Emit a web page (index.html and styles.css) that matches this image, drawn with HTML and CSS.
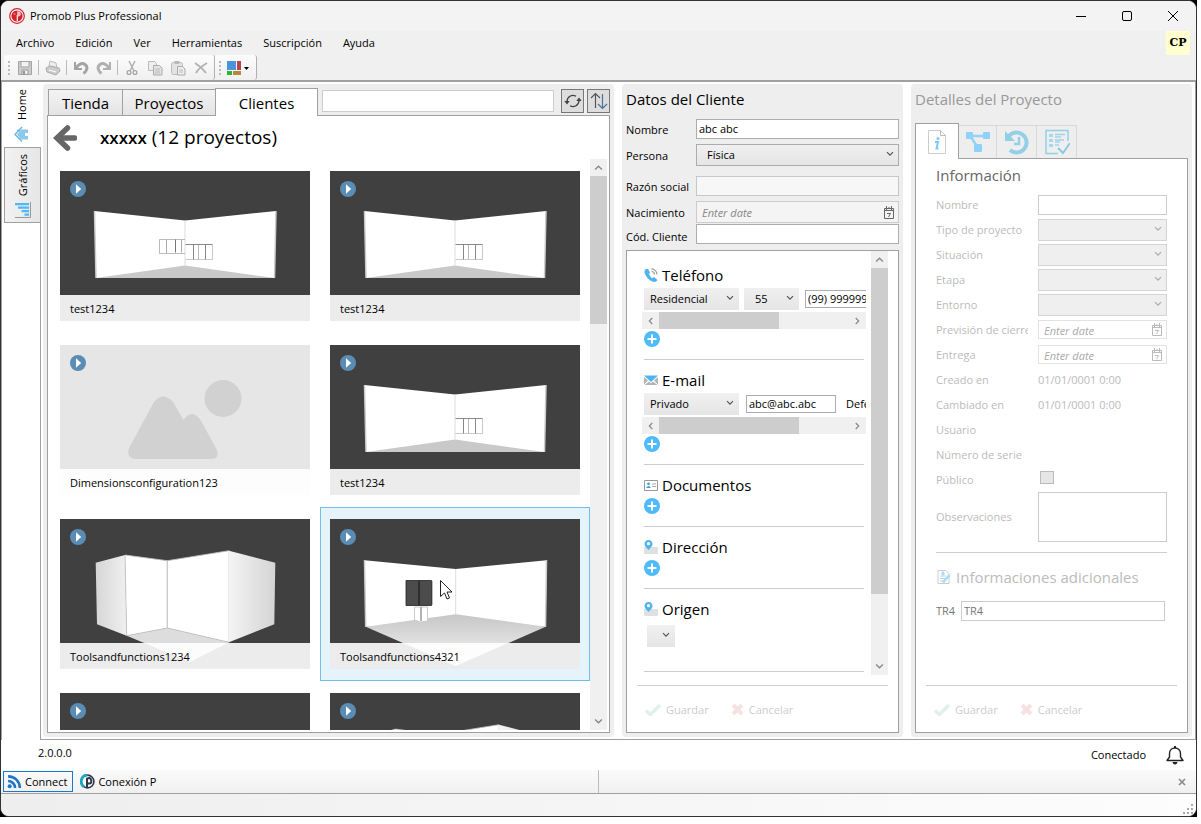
FILE: index.html
```html
<!DOCTYPE html>
<html lang="es">
<head>
<meta charset="utf-8">
<title>Promob Plus Professional</title>
<link rel="stylesheet" href="styles.css">
</head>
<body>
<svg class="defs" aria-hidden="true">
  <symbol id="chev" viewBox="0 0 8 6"><path d="M1 1.200 4 4.200 7 1.200" fill="none" stroke="currentColor" stroke-width="1.200"/></symbol>
  <symbol id="plus" viewBox="0 0 16 16"><circle cx="8" cy="8" r="8" fill="#4dbbfd"/><path d="M8 3.500v9M3.500 8h9" stroke="#fff" stroke-width="2"/></symbol>
  <symbol id="play" viewBox="0 0 16 16"><circle cx="8" cy="8" r="8" fill="#5a8cb4"/><path d="M6 3.200 11.200 8 6 12.800z" fill="#fff"/></symbol>
  <symbol id="cal" viewBox="0 0 12 13"><path d="M1.500 2.500h9v10h-9z" fill="none" stroke="currentColor"/><path d="M1 4.500h10M3.500 0v4M8.500 0v4M6 1v2" stroke="currentColor"/><path d="M4 7.500h3.500L5.500 11" fill="none" stroke="currentColor"/></symbol>
  <symbol id="check" viewBox="0 0 16 13"><path d="M1 7.500 5.500 11.500 15 2" fill="none" stroke="#e2efeb" stroke-width="3.500"/></symbol>
  <symbol id="cross" viewBox="0 0 13 13"><path d="M2 2l9 9M11 2l-9 9" stroke="#f6e2e2" stroke-width="4"/></symbol>
  <symbol id="pin" viewBox="0 0 14 14"><path d="M0 7h14v7H0z" fill="#e0e0e0"/><path d="M4.500 0C2 0 .5 1.900.5 4c0 2.500 2.500 4 4 6 1.500-2 4-3.500 4-6 0-2.100-1.500-4-4-4z" fill="#4db4ec"/><circle cx="4.500" cy="3.700" r="1.600" fill="#fff"/></symbol>
  <symbol id="room" viewBox="0 0 250 150">
    <path d="M34.500 40 125 49.500 216 40 214.500 107H36z" fill="#fff"/>
    <path d="M36 107 125 94.500 214.500 107z" fill="#c9c9c9"/>
    <path d="M125 49.500v45" stroke="#ddd"/>
    <path d="M34.500 40 36 107M216 40 214.500 107" stroke="#ccc" stroke-width="1.500"/>
  </symbol>
  <symbol id="cabR" viewBox="0 0 250 150"><path d="M125.500 88.500h27v-15" fill="none" stroke="#bbb" stroke-width=".8"/><path d="M125.500 73.500h27" stroke="#888"/><path d="M133.500 73.500v15M145.500 73.500v15" stroke="#888"/><path d="M138.500 74v14.500" stroke="#bbb"/></symbol>
  <symbol id="lroom" viewBox="0 0 250 150">
    <path d="M66.700 116.700 107.300 109 169 123.300 130 143z" fill="#ddd"/>
    <path d="M35.700 43.700 65 36 66.700 116.700 37 105.300z" fill="url(#gl)"/>
    <path d="M65 36 107.300 41.700V109L66.700 116.700zM107.300 41.700 169 31.700V123.300L107.300 109z" fill="#fff" stroke="#c4c4c4" stroke-width=".8"/>
    <path d="M169 31.700 215.300 43.700 214.300 105.300 169 123.300z" fill="url(#gr)"/>
  </symbol>
  <defs>
    <linearGradient id="gl"><stop stop-color="#d6d6d6"/><stop offset="1" stop-color="#f0f0f0"/></linearGradient>
    <linearGradient id="gr"><stop stop-color="#f4f4f4"/><stop offset="1" stop-color="#d4d4d4"/></linearGradient>
  </defs>
</svg>

<div class="desktop">
<div class="window">
  <header class="titlebar">
    <svg class="applogo" viewBox="0 0 16 16"><circle cx="8" cy="8" r="7.300" fill="#fff" stroke="#d3222c" stroke-width="1.200"/><circle cx="8" cy="8" r="5.600" fill="#d3222c"/><path d="M8.300 7v6" stroke="#fff" stroke-width="1.200"/><path d="M8.200 3.200q3.600 0 3.600 2.800T8.200 8.800z" fill="#f7c3c6"/><path d="M4.500 6h2" stroke="#f3aeb2"/></svg>
    <span class="title">Promob Plus Professional</span>
    <button class="winbtn" aria-label="Minimizar"><svg viewBox="0 0 12 12"><path d="M1 6.500h10" stroke="#000"/></svg></button>
    <button class="winbtn" aria-label="Maximizar"><svg viewBox="0 0 12 12"><rect x="1.500" y="1.500" width="9" height="9" rx="1.500" fill="none" stroke="#000"/></svg></button>
    <button class="winbtn" aria-label="Cerrar"><svg viewBox="0 0 12 12"><path d="M1 1l10 10M11 1 1 11" stroke="#000"/></svg></button>
  </header>

  <div class="commands">
    <div class="bars">
      <nav class="menubar">
        <button>Archivo</button><button>Edición</button><button>Ver</button><button>Herramientas</button><button>Suscripción</button><button>Ayuda</button>
      </nav>
      <div class="toolbar">
        <div class="strip">
          <i class="grip"></i>
          <button aria-label="Guardar"><svg viewBox="0 0 16 16"><path d="M1.500 1.500h13v13h-13z" fill="#ccc" stroke="#a4a4a4"/><path d="M4 1.500h8V7H4z" fill="#f2f2f2" stroke="#a4a4a4"/><path d="M5 10h6v4.500H5z" fill="#eee" stroke="#999"/><path d="M6 11h2v3H6z" fill="#999"/></svg></button>
          <i class="sep"></i>
          <button aria-label="Imprimir"><svg viewBox="0 0 16 16"><path d="M4 6 5 1l6 2 1 5z" fill="#eee" stroke="#bbb"/><path d="M1 8l4-2 9 2 1 3-4 4-9-3z" fill="#ccc" stroke="#aaa"/><path d="M4 10l7 2" stroke="#fff"/></svg></button>
          <i class="sep"></i>
          <button aria-label="Deshacer"><svg viewBox="0 0 16 16"><path d="M2 2v7h7" fill="none" stroke="#a4a4a4" stroke-width="2"/><path d="M3 8.500C5 4 9 2.500 12 4.500s2.500 6-1.500 9" fill="none" stroke="#a4a4a4" stroke-width="3"/></svg></button>
          <button aria-label="Rehacer"><svg viewBox="0 0 16 16"><path d="M14 2v7H7" fill="none" stroke="#b0b0b0" stroke-width="2"/><path d="M13 8.500C11 4 7 2.500 4 4.500s-2.500 6 1.500 9" fill="none" stroke="#b0b0b0" stroke-width="3"/></svg></button>
          <i class="sep"></i>
          <button aria-label="Cortar"><svg viewBox="0 0 16 16"><path d="M5 1l5 10M11 1 6 11" stroke="#b0b0b0" stroke-width="1.500"/><circle cx="5" cy="12.500" r="1.900" fill="none" stroke="#a4a4a4" stroke-width="1.300"/><circle cx="11" cy="12.500" r="1.900" fill="none" stroke="#a4a4a4" stroke-width="1.300"/></svg></button>
          <button aria-label="Copiar"><svg viewBox="0 0 16 16"><path d="M1.500 1.500h6l2 2v7h-8z" fill="#eee" stroke="#bbb"/><path d="M6.500 5.500h6l2.500 2.500v7H6.500z" fill="#e4e4e4" stroke="#aaa"/><path d="M8 9h5M8 11h5M8 13h5" stroke="#bbb"/></svg></button>
          <button aria-label="Pegar"><svg viewBox="0 0 16 16"><rect x="1.500" y="2.500" width="11" height="12" rx="2" fill="#e4e4e4" stroke="#bbb"/><path d="M4.500 1h5v3h-5z" fill="#bbb"/><path d="M7.500 6.500h5l2.500 2.500v6H7.500z" fill="#eee" stroke="#aaa"/><path d="M9 10h4M9 12h4" stroke="#bbb"/></svg></button>
          <button aria-label="Eliminar"><svg viewBox="0 0 16 16"><path d="M2 3c5 3 8 6 11 10M14 3C9 6 5 9 3 13" fill="none" stroke="#b0b0b0" stroke-width="1.800"/></svg></button>
        </div>
        <div class="strip">
          <i class="grip"></i>
          <button class="layout" aria-label="Disposición"><svg viewBox="0 0 24 16"><path d="M1 1h9v9H1z" fill="#4a94dc"/><path d="M11 1h4v9h-4z" fill="#b5474c"/><path d="M1 11h5v4H1z" fill="#35b035"/><path d="M7 11h8v4H7z" fill="#b28a3c"/><path d="M18 7h5l-2.500 3z" fill="#000"/></svg></button>
        </div>
      </div>
    </div>
    <span class="user">CP</span>
  </div>

  <main class="workspace">
    <nav class="sidetabs">
      <button class="sidetab current"><span>Home</span>
        <svg viewBox="0 0 16 16"><path d="M7 3.500h7V7h-3v3h3v3.500H7L3 8.500z" fill="#8ccaea"/><path d="M8 1 1 8.500 8 15.500" fill="none" stroke="#5fb6e4" stroke-width="1.300"/><path d="M3 4.500h3" stroke="#5fb6e4" stroke-width="1.500"/></svg>
      </button>
      <button class="sidetab"><span>Gráficos</span>
        <svg viewBox="0 0 16 16"><path d="M0 1h14v2.200H0zM3 4.500h11v2.200H3zM6.500 8H14v2.200H6.500zM9.500 11.500H14v2.200H9.500z" fill="#4db8fa"/><path d="M15.500 0v15.500H0" fill="none" stroke="#999"/></svg>
      </button>
    </nav>

    <div class="panels">
      <section class="panel browser">
        <div class="tabstrip">
          <button class="tab">Tienda</button><button class="tab second">Proyectos</button><button class="tab current">Clientes</button>
          <input class="search" type="text" aria-label="Buscar">
          <button class="square" aria-label="Actualizar"><svg viewBox="0 0 18 18"><path d="M3 9.500a6 6 0 0 1 9-5.200M15 8.500a6 6 0 0 1-9 5.200" fill="none" stroke="#444" stroke-width="1.300"/><path d="M.3 9h5.400L3 12.500zM12.300 9h5.400L15 5.500z" fill="#444"/></svg></button>
          <button class="square" aria-label="Ordenar"><svg viewBox="0 0 18 18"><path d="M5.500 16V1.500M1 6l4.500-4.500L10 6" fill="none" stroke="#555" stroke-width="1.200"/><path d="M12.500 2v14.500M8 12l4.500 4.500L17 12" fill="none" stroke="#46749c" stroke-width="1.200"/></svg></button>
        </div>
        <div class="browserbody">
          <div class="clienthead">
            <button class="back" aria-label="Volver"><svg viewBox="0 0 24 26"><path d="M14.500 3 4 13l10.500 10" fill="none" stroke="#666" stroke-width="5.500" stroke-linecap="round"/><path d="M5 13h16.500" stroke="#666" stroke-width="5.500" stroke-linecap="round"/></svg></button>
            <h1><b>xxxxx</b> (12 proyectos)</h1>
          </div>
          <div class="listwrap">
            <div class="cards">
              <article class="card"><figure>
                <svg class="pic" viewBox="0 0 250 150"><use href="#room"/><use href="#cabR"/><path d="M125 68.500H99.500v14H125" fill="none" stroke="#aaa" stroke-width=".8"/><path d="M115.500 68.500v13" stroke="#777"/><path d="M106.500 68.500v14M121.500 68.500v13" stroke="#aaa"/></svg>
                <figcaption>test1234</figcaption><svg class="play"><use href="#play"/></svg></figure></article>
              <article class="card"><figure>
                <svg class="pic" viewBox="0 0 250 150"><use href="#room"/><use href="#cabR"/></svg>
                <figcaption>test1234</figcaption><svg class="play"><use href="#play"/></svg></figure></article>
              <article class="card"><figure class="empty">
                <svg class="pic" viewBox="0 0 250 150"><circle cx="163" cy="53.500" r="18.500" fill="#d1d1d1"/><path d="M94 57q9-11 19 0l10.500 18q8-12 17 0l16 29q4 10-6 10H75q-9-1-6-11z" fill="#d1d1d1"/></svg>
                <figcaption>Dimensionsconfiguration123</figcaption><svg class="play"><use href="#play"/></svg></figure></article>
              <article class="card"><figure>
                <svg class="pic" viewBox="0 0 250 150"><use href="#room"/><use href="#cabR"/></svg>
                <figcaption>test1234</figcaption><svg class="play"><use href="#play"/></svg></figure></article>
              <article class="card"><figure>
                <svg class="pic" viewBox="0 0 250 150"><use href="#lroom"/></svg>
                <figcaption>Toolsandfunctions1234</figcaption><svg class="play"><use href="#play"/></svg></figure></article>
              <article class="card selected"><figure>
                <svg class="pic" viewBox="0 0 250 150"><path d="M34.500 41.300 125.700 50 216.700 41.300 215.700 107.700H35.700z" fill="#fff"/><path d="M35.700 107.700 125.700 95.300 215.700 107.700 125.700 147z" fill="url(#gf)"/><path d="M125.700 50v45" stroke="#ddd"/><path d="M34.500 41 35.700 108M216.500 41 215.500 108" stroke="#ccc" stroke-width="1.500"/><linearGradient id="gf" x1="0" x2="0" y1="0" y2="1"><stop stop-color="#c6c6c6"/><stop offset="1" stop-color="#f6f6f6"/></linearGradient>
                <path d="M76 61.500h25.500v25H76z" fill="#4c4c4c" stroke="#222" stroke-width=".8"/><path d="M89 62v24" stroke="#111"/><path d="M102.500 62v24" stroke="#bbb"/><path d="M84.500 88h13v14l-7 1-6-2z" fill="#fff" stroke="#ccc"/><path d="M91 88v14" stroke="#666"/>
                <path d="M110.500 61.500v16l4-3.500 2.500 6 2.500-1-2.500-6h5z" fill="#fff" stroke="#222"/></svg>
                <figcaption>Toolsandfunctions4321</figcaption><svg class="play"><use href="#play"/></svg></figure></article>
              <article class="card"><figure>
                <svg class="pic" viewBox="0 0 250 150"><use href="#room"/></svg><svg class="play"><use href="#play"/></svg></figure></article>
              <article class="card"><figure>
                <svg class="pic" viewBox="0 0 250 150"><use href="#lroom"/></svg><svg class="play"><use href="#play"/></svg></figure></article>
            </div>
            <div class="vscroll"><svg class="up"><use href="#chev"/></svg><div class="thumb short"></div><svg class="down"><use href="#chev"/></svg></div>
          </div>
        </div>
      </section>

      <section class="panel client">
        <h2>Datos del Cliente</h2>
        <form class="clientform">
          <label for="nombre">Nombre</label><input id="nombre" type="text" value="abc abc">
          <label for="persona">Persona</label><div class="select outlined"><select id="persona"><option>Física</option></select><svg><use href="#chev"/></svg></div>
          <label for="razon" class="spaced">Razón social</label><input id="razon" class="spaced off" type="text" disabled>
          <label for="nac">Nacimiento</label><div class="date"><input id="nac" type="text" placeholder="Enter date"><svg><use href="#cal"/></svg></div>
          <label for="cod">Cód. Cliente</label><input id="cod" type="text">
        </form>
        <div class="contact">
          <div class="contactscroll">
            <div class="sections">
              <div class="sect">
                <h3><svg viewBox="0 0 14 14"><path d="M2 1C0 2.500 0 5 2 8s5 5.500 8 6c1.500 0 3-1 3.500-2l-3.500-3-2 1.200C6.500 9 5.500 7.500 5 6l1-1.500L4 1z" fill="#4db4f0"/><path d="M7.500.8A6 6 0 0 1 13 6.500M7.500 3.500A3 3 0 0 1 10.500 6.500" fill="none" stroke="#999" stroke-width="1.200"/></svg>Teléfono</h3>
                <div class="row"><div class="select w95"><select aria-label="Tipo de teléfono"><option>Residencial</option></select><svg><use href="#chev"/></svg></div><div class="select w55"><select aria-label="Código de país"><option>55</option></select><svg><use href="#chev"/></svg></div><input class="phone" type="text" value="(99) 999999999" aria-label="Número"></div>
                <div class="hscroll"><svg class="left"><use href="#chev"/></svg><div class="hthumb"></div><svg class="right"><use href="#chev"/></svg></div>
                <button type="button" class="add" aria-label="Añadir teléfono"><svg><use href="#plus"/></svg></button>
              </div>
              <div class="sect">
                <h3><svg viewBox="0 0 14 14"><path d="M0 2.500h14L7 9z" fill="#4db4f0"/><path d="M0 4l4 3.500L0 11.500zM14 4l-4 3.500 4 4zM.5 12 5 8.500l2 1.800 2-1.800 4.500 3.500z" fill="#b4b4b4"/></svg>E-mail</h3>
                <div class="row"><div class="select w95"><select aria-label="Tipo de e-mail"><option>Privado</option></select><svg><use href="#chev"/></svg></div><input class="mail" type="text" value="abc@abc.abc" aria-label="E-mail"><span class="defecto">Defecto</span></div>
                <div class="hscroll"><svg class="left"><use href="#chev"/></svg><div class="hthumb wide"></div><svg class="right"><use href="#chev"/></svg></div>
                <button type="button" class="add" aria-label="Añadir e-mail"><svg><use href="#plus"/></svg></button>
              </div>
              <div class="sect">
                <h3><svg viewBox="0 0 14 14"><path d="M.5 2.500h13v10H.5z" fill="#fff" stroke="#999"/><circle cx="4.500" cy="5.800" r="1.400" fill="#3b9fdc"/><path d="M2 10q2.500-4 5 0z" fill="#3b9fdc"/><path d="M8 6h4M8 8.500h4" stroke="#aaa"/></svg>Documentos</h3>
                <button type="button" class="add" aria-label="Añadir documento"><svg><use href="#plus"/></svg></button>
              </div>
              <div class="sect">
                <h3><svg><use href="#pin"/></svg>Dirección</h3>
                <button type="button" class="add" aria-label="Añadir dirección"><svg><use href="#plus"/></svg></button>
              </div>
              <div class="sect">
                <h3><svg><use href="#pin"/></svg>Origen</h3>
                <div class="select origin"><select aria-label="Origen"><option></option></select><svg><use href="#chev"/></svg></div>
              </div>
            </div>
            <div class="vscroll"><svg class="up"><use href="#chev"/></svg><div class="thumb tall"></div><svg class="down"><use href="#chev"/></svg></div>
          </div>
          <footer class="actions"><button disabled><svg class="ck"><use href="#check"/></svg>Guardar</button><button disabled><svg class="cx"><use href="#cross"/></svg>Cancelar</button></footer>
        </div>
      </section>

      <section class="panel project">
        <h2>Detalles del Proyecto</h2>
        <div class="icontabs">
          <button class="itab current" aria-label="Información"><svg viewBox="0 0 26 26"><path d="M4.500 1.500h12l5 5v18h-17z" fill="#fff" stroke="#ccc"/><path d="M16.500 1.500v5h5" fill="none" stroke="#bbb"/><circle cx="14" cy="9.500" r="1.500" fill="#7cc8f6"/><path d="M11 13h3l-1.500 6.500h2" fill="none" stroke="#7cc8f6" stroke-width="2"/></svg></button>
          <button class="itab" aria-label="Relaciones"><svg viewBox="0 0 26 26"><path d="M5 7h16M6 8l7 11" stroke="#93d3f8" stroke-width="2.500"/><rect x="1" y="3" width="7" height="7" rx="1" fill="#8fd1fa"/><rect x="18" y="3" width="7" height="7" rx="1" fill="#8fd1fa"/><rect x="9" y="15" width="8" height="8" rx="1" fill="#8fd1fa"/></svg></button>
          <button class="itab wide" aria-label="Historial"><svg viewBox="0 0 26 26"><path d="M5 7a10 10 0 1 1 1 14" fill="none" stroke="#93d0e8" stroke-width="4"/><path d="M1 2v10h10z" fill="#93d0e8"/><path d="M15 8v7h-5" fill="none" stroke="#93d0e8" stroke-width="2.500"/></svg></button>
          <button class="itab wide" aria-label="Tareas"><svg viewBox="0 0 26 26"><path d="M24 12V1.500H2v23h12" fill="none" stroke="#93d0e8" stroke-width="1.500"/><path d="M5 5h4v3H5zM5 10h4v3H5zM5 15h4v3H5z" fill="#a5d8ec"/><path d="M11 5.500h10M11 8h6M11 11h9M11 13h5M11 16h4" stroke="#a0d5ec" stroke-width="1.300"/><path d="M14 19l5 5 7-10" fill="none" stroke="#86c9e4" stroke-width="1.800"/></svg></button>
        </div>
        <div class="projectbody">
          <form class="projectform">
            <h3>Información</h3>
            <div class="fields">
              <label for="p1">Nombre</label><input id="p1" type="text">
              <label for="p2">Tipo de proyecto</label><div class="select outlined"><select id="p2" disabled></select><svg><use href="#chev"/></svg></div>
              <label for="p3">Situación</label><div class="select outlined"><select id="p3" disabled></select><svg><use href="#chev"/></svg></div>
              <label for="p4">Etapa</label><div class="select outlined"><select id="p4" disabled></select><svg><use href="#chev"/></svg></div>
              <label for="p5">Entorno</label><div class="select outlined"><select id="p5" disabled></select><svg><use href="#chev"/></svg></div>
              <label for="p6">Previsión de cierre</label><div class="date"><input id="p6" type="text" placeholder="Enter date"><svg><use href="#cal"/></svg></div>
              <label for="p7">Entrega</label><div class="date"><input id="p7" type="text" placeholder="Enter date"><svg><use href="#cal"/></svg></div>
              <span>Creado en</span><span>01/01/0001 0:00</span>
              <span>Cambiado en</span><span>01/01/0001 0:00</span>
              <span>Usuario</span><span></span>
              <span>Número de serie</span><span></span>
              <label for="p8">Público</label><input id="p8" type="checkbox" disabled>
              <label for="p9">Observaciones</label><textarea id="p9"></textarea>
            </div>
            <h4><svg viewBox="0 0 14 14"><path d="M1 .5h8l3 3v10H1z" fill="#fff" stroke="#ccc"/><path d="M5 2h2v3H5zM3 6h6M3 8.500h6M3 11h4" fill="#a6d8f6" stroke="#b6d9ea"/><path d="M6 12.500 12.500 5" stroke="#a6dcf8" stroke-width="2.500"/></svg>Informaciones adicionales</h4>
            <div class="extra"><label for="tr4">TR4</label><input id="tr4" type="text" value="TR4"></div>
          </form>
          <footer class="actions"><button disabled><svg class="ck"><use href="#check"/></svg>Guardar</button><button disabled><svg class="cx"><use href="#cross"/></svg>Cancelar</button></footer>
        </div>
      </section>
    </div>
  </main>

  <div class="status"><span class="version">2.0.0.0</span><span>Conectado</span>
    <svg viewBox="0 0 20 20"><path d="M2 15.500h16L15.500 12V8.500C15.500 5 13 3 10 3S4.500 5 4.500 8.500V12z" fill="none" stroke="#222" stroke-width="1.400" stroke-linejoin="round"/><path d="M9 1h2v2H9zM7.500 17h5q-.5 2.500-2.500 2.500T7.500 17z" fill="#222"/></svg>
  </div>
  <div class="docks">
    <div class="dock">
      <button class="docktab current"><svg viewBox="0 0 14 14"><circle cx="2.500" cy="11.500" r="1.900" fill="#2176c4"/><path d="M1 6.500a6.500 6.500 0 0 1 6.500 6.500M1 2.200A10.800 10.800 0 0 1 12 13" fill="none" stroke="#2176c4" stroke-width="2.400"/></svg>Connect</button>
      <button class="docktab"><svg viewBox="0 0 16 16"><circle cx="8" cy="8" r="6.800" fill="#fff" stroke="#2b3a48" stroke-width="1.800"/><path d="M8 1a7 7 0 0 0-4 12.500" fill="none" stroke="#1ba7c4" stroke-width="3"/><path d="M7.500 14V5q4-2 4.500 2T8 10" fill="none" stroke="#2b3a48" stroke-width="2.200"/></svg>Conexión P</button>
    </div>
    <div class="dock right"><button class="close" aria-label="Cerrar panel"><svg viewBox="0 0 8 8"><path d="M1 1l6 6M7 1 1 7" stroke="#888" stroke-width="1.600"/></svg></button></div>
  </div>
  <div class="bottombar"><svg viewBox="0 0 10 10"><path d="M8 0h2v2H8zM8 4h2v2H8zM8 8h2v2H8zM4 4h2v2H4zM4 8h2v2H4zM0 8h2v2H0z" fill="#aaa"/></svg></div>
</div>
</div>
</body>
</html>
```
FILE: styles.css
```css
* { box-sizing: border-box; }
body {
  margin: 0;
  height: 100vh;
  padding: 0 4px 7px 0;
  background: #fff;
  font: 11px/16px "Open Sans", "Noto Sans", sans-serif;
  color: #000;
}
button, input, select, textarea { font: inherit; color: inherit; margin: 0; }
button { background: none; border: 0; padding: 0; }
h1, h2, h3, h4, figure { margin: 0; font-weight: 400; }
svg { display: block; flex: none; }
.defs { position: absolute; width: 0; height: 0; }

.desktop { height: 100%; background: #000; }
.window {
  height: 100%;
  display: flex;
  flex-direction: column;
  overflow: hidden;
  background: #f0f0f0;
  border: 1px solid #333;
  border-radius: 9px;
}

/* Title, menu and tool bars */
.titlebar { display: flex; align-items: center; height: 30px; padding-left: 8px; background: #f3f3f3; }
.applogo { width: 16px; height: 16px; margin-right: 5px; }
.title { flex: 1; }
.winbtn { width: 46px; height: 30px; display: grid; place-items: center; }
.winbtn svg { width: 12px; height: 12px; }
.commands { display: flex; justify-content: space-between; height: 49px; }
.menubar { display: flex; height: 24px; padding-left: 15px; gap: 21px; }
.toolbar { display: flex; height: 25px; padding-left: 3px; }
.strip {
  display: flex;
  align-items: center;
  padding: 0 2px 0 4px;
  background: linear-gradient(#fcfcfc, #f0f0f0);
  border-right: 1px solid #b0b0b0;
  border-radius: 3px;
}
.strip button { width: 23px; display: grid; place-items: center; }
.strip svg { width: 16px; height: 16px; }
.strip .layout { width: 28px; margin-right: 2px; }
.strip .layout svg { width: 24px; }
.grip { width: 2px; height: 14px; margin-right: 3px; background: repeating-linear-gradient(#bbb 0 2px, transparent 2px 4px); }
.sep { width: 1px; height: 15px; margin: 0 2px; background: #bbb; }
.user {
  width: 24px;
  height: 24px;
  margin-right: 6px;
  background: #ffffd0;
  font: bold 11px/24px "DejaVu Serif", serif;
  text-align: center;
}

/* Workspace */
.workspace {
  flex: 1;
  min-height: 0;
  display: flex;
  background: #fff;
  border: solid #a0a0a0;
  border-width: 2px 1px 0;
}
.sidetabs { width: 39px; padding-left: 2px; border-right: 1px solid #a0a0a0; }
.sidetab {
  width: 36px;
  height: 76px;
  display: flex;
  flex-direction: column;
  align-items: center;
  justify-content: space-between;
  padding: 6px 0 4px;
  border: 1px solid #a0a0a0;
  border-right: 0;
  background: linear-gradient(90deg, #f2f2f2, #e6e6e6);
}
.sidetab.current { width: 37px; height: 65px; padding: 7px 2px 5px 0; border: 0; background: #fff; }
.sidetab span { writing-mode: vertical-rl; transform: rotate(180deg); }
.sidetab svg { width: 16px; height: 16px; }
.panels {
  flex: 1;
  min-width: 0;
  display: grid;
  grid-template-columns: minmax(0, 1fr) 281px 281px;
  gap: 8px;
  padding: 2px 3px 2px 2px;
  border-bottom: 1px solid #a0a0a0;
}
.panel {
  min-width: 0;
  min-height: 0;
  display: flex;
  flex-direction: column;
  padding: 4px;
  background: #eee;
  border-radius: 4px;
}

/* Client browser */
.tabstrip { display: flex; align-items: flex-end; height: 27px; padding-left: 1px; }
.tab {
  width: 75px;
  height: 26px;
  padding: 0;
  font-size: 15px;
  line-height: 24px;
  border: 1px solid #a0a0a0;
  border-bottom: 0;
  background: linear-gradient(#f3f3f3, #e4e4e4);
}
.tab.second { width: 92px; border-left: 0; border-right: 0; }
.tab.current { width: 103px; height: 28px; background: #fff; margin-bottom: -1px; position: relative; }
.search[type="text"] { flex: 1; min-width: 0; height: 22px; margin: 0 7px 3px 4px; border: 1px solid #ccc; background: #fff; }
.square {
  width: 23px;
  height: 24px;
  display: grid;
  place-items: center;
  margin: 0 0 2px;
  border: 1px solid #777;
  background: #ddd;
}
.square + .square { margin-left: 3px; }
.square svg { width: 18px; height: 18px; }
.browserbody {
  flex: 1;
  min-height: 0;
  display: flex;
  flex-direction: column;
  padding: 0 2px 2px;
  background: #fff;
  border: 1px solid #a0a0a0;
}
.clienthead { display: flex; align-items: center; height: 43px; padding: 0 0 0 3px; }
.back svg { width: 24px; height: 26px; }
h1 { margin-left: 23px; font-size: 19px; line-height: 26px; white-space: pre; }
h1 b { font-size: 17px; font-weight: 600; }
.listwrap { flex: 1; min-height: 0; display: flex; }
.cards { flex: 1; min-width: 0; display: grid; grid-template-columns: repeat(auto-fill, 270px); grid-auto-rows: 174px; overflow: hidden; }
.card { padding: 12px 10px; }
.card.selected { padding: 11px 9px; background: #e5f3fa; border: 1px solid #70bfe6; }
figure { position: relative; height: 150px; background: #404040; }
figure.empty { background: #e6e6e6; }
.pic { width: 100%; height: 150px; }
figcaption { position: absolute; left: 0; right: 0; bottom: 0; padding: 6px 10px 4px; background: rgba(255, 255, 255, .9); }
.play { position: absolute; left: 10px; top: 10px; width: 16px; height: 16px; }

/* Scroll bars */
.vscroll { flex: none; width: 17px; display: flex; flex-direction: column; background: #f0f0f0; color: #888; }
.vscroll svg { width: 9px; height: 17px; padding: 5px 0; align-self: center; }
.vscroll .down { margin-top: auto; }
.up { transform: rotate(180deg); }
.thumb { background: #cdcdcd; }
.thumb.short { height: 26%; }
.thumb.tall { height: 77%; }
.hscroll { display: flex; align-items: center; height: 17px; margin-left: -2px; background: #f0f0f0; color: #888; }
.hscroll svg { width: 17px; height: 6px; padding: 0 4px; }
.hscroll .left { transform: rotate(90deg); }
.hscroll .right { transform: rotate(-90deg); margin-left: auto; }
.hthumb { width: 120px; height: 17px; background: #cdcdcd; }
.hthumb.wide { width: 140px; }

/* Form controls */
input[type="text"] { width: 100%; min-width: 0; height: 20px; padding: 0 2px 1px; border: 1px solid #abadb3; border-radius: 0; background: #fff; outline: 0; }
.select { display: grid; grid-template-columns: 1fr 17px; align-items: center; }
.select select {
  grid-area: 1 / 1 / 2 / 3;
  width: 100%;
  height: 22px;
  padding: 0 6px;
  appearance: none;
  border: 0;
  border-radius: 0;
  background: linear-gradient(#f0f0f0, #e5e5e5);
  opacity: 1;
}
.select svg { grid-area: 1 / 2; width: 8px; height: 6px; margin: 0 0 2px 4px; pointer-events: none; color: #555; }
.select.outlined select { padding: 0 10px; border: 1px solid #acacac; }
.date { display: grid; grid-template-columns: 1fr 16px; align-items: center; }
.date input[type="text"] { grid-area: 1 / 1 / 2 / 3; height: 22px; padding: 1px 5px 0; background: #f4f4f4; border-color: #ccc; }
.date svg { grid-area: 1 / 2; width: 12px; height: 13px; color: #666; }
.date input::placeholder { font-style: italic; color: #888; }

/* Client data */
h2 { height: 31px; font-size: 15px; line-height: 22px; }
.clientform { display: grid; grid-template-columns: 70px minmax(0, 1fr); align-items: center; row-gap: 5px; }
.clientform label { white-space: nowrap; padding-top: 1px; }
.clientform .spaced { margin-top: 5px; }
.clientform #cod { margin-top: -5px; }
.contact {
  flex: 1;
  min-height: 0;
  display: flex;
  flex-direction: column;
  margin-top: 5px;
  padding: 0 10px;
  background: #fff;
  border: 1px solid #a0a0a0;
}
.contactscroll { flex: 1; min-height: 0; display: flex; margin-bottom: 10px; }
.sections { flex: 1; min-width: 0; padding: 4px 7px 0; overflow: hidden; }
.sect { display: flex; flex-direction: column; padding: 9px 0 12px; border-bottom: 1px solid #ccc; }
.sect h3 { display: flex; align-items: center; gap: 4px; height: 21px; margin-bottom: 3px; font-size: 15px; }
.sect h3 svg { width: 14px; height: 14px; }
.row { display: flex; align-items: center; height: 22px; margin: 0 -2px 2px 0; overflow: hidden; }
.w95 { flex: none; width: 95px; }
.w55 { flex: none; width: 55px; margin: 0 6px 0 5px; }
.w55 select { padding-left: 11px; }
.row input[type="text"] { flex: none; height: 18px; }
.row .phone { width: 90px; }
.row .mail { width: 90px; margin: 0 10px 0 7px; }
.row + .hscroll { margin-right: -2px; }
.add { width: 16px; height: 16px; }
.hscroll + .add { margin-top: 2px; }
.add svg { width: 16px; height: 16px; }
.origin { width: 28px; margin: 3px 0 12px 3px; }
.off[type="text"] { background: #f7f7f7; border-color: #c5c7cb; }
.actions { display: flex; align-items: center; gap: 22px; height: 48px; padding-left: 8px; border-top: 1px solid #ccc; }
.contactscroll + .actions { margin-bottom: -1px; }
.projectform + .actions { margin-bottom: -1px; }
.actions button { display: flex; align-items: center; gap: 5px; color: #ccc; }
.ck { width: 16px; height: 13px; }
.cx { width: 13px; height: 13px; }

/* Project details */
.project h2 { height: 35px; color: #999; }
.icontabs { display: flex; align-items: flex-end; height: 35px; }
.itab { width: 38px; height: 33px; display: grid; place-items: center; border: 1px solid #d8d8d8; border-width: 1px 1px 0 0; }
.itab.wide { width: 40px; }
.itab svg { width: 26px; height: 26px; }
.itab.current { width: 44px; height: 36px; margin-bottom: -1px; border: 1px solid #a0a0a0; border-bottom: 0; background: #fff; position: relative; }
.projectbody { flex: 1; min-height: 0; display: flex; flex-direction: column; padding: 0 10px; background: #fff; border: 1px solid #a0a0a0; }
.projectform { flex: 1; min-height: 0; padding: 6px 10px 0; color: #bbb; }
.projectform h3 { height: 27px; font-size: 15px; line-height: 20px; color: #666; }
.fields { display: grid; grid-template-columns: 92px minmax(0, 1fr); column-gap: 10px; grid-auto-rows: minmax(25px, auto); align-items: center; padding-bottom: 10px; border-bottom: 1px solid #ccc; }
.fields label, .fields span { white-space: nowrap; overflow: hidden; }
.fields input[type="text"] { border-color: #ccc; }
.fields .select select { border-color: #d5d5d5; background: #efefef; }
.fields .select svg { color: #aaa; }
.fields .date input[type="text"] { height: 19px; background: #fff; border-color: #e2e2e2; }
.fields .date input::placeholder { color: #aaa; }
.fields .date svg { color: #bbb; }
.fields input[type="checkbox"] { appearance: none; width: 14px; height: 13px; margin: 0 2px 4px; border: 1px solid #bbb; background: #e6e6e6; }
.fields textarea { display: block; width: 100%; height: 50px; border: 1px solid #ccc; background: #fff; resize: none; }
h4 { display: flex; align-items: center; gap: 5px; height: 48px; padding-left: 1px; font-size: 15px; white-space: nowrap; }
h4 svg { width: 14px; height: 14px; }
.extra { display: grid; grid-template-columns: 25px minmax(0, 1fr); align-items: center; padding-right: 2px; color: #777; }
.extra input[type="text"] { border-color: #ccc; }

/* Lower bars */
.status { display: flex; align-items: center; gap: 19px; height: 30px; padding: 0 11px 0 37px; background: #fff; }
.version { flex: 1; padding-bottom: 4px; }
.status svg { width: 20px; height: 20px; }
.docks { display: grid; grid-template-columns: 1fr 1fr; height: 24px; border-bottom: 1px solid #a0a0a0; background: linear-gradient(#fbfbfb, #f0f0f0); }
.dock { display: flex; align-items: center; gap: 3px; padding-left: 2px; border-right: 1px solid #bbb; }
.dock.right { justify-content: flex-end; padding-right: 10px; border-right: 0; }
.docktab { display: flex; align-items: center; gap: 3px; height: 21px; padding: 0 4px 0 3px; border: 1px solid transparent; }
.docktab.current { padding-right: 5px; border-color: #1b77c8; }
.docktab svg { width: 15px; height: 15px; }
.close svg { width: 8px; height: 8px; }
.bottombar { display: flex; justify-content: flex-end; align-items: flex-end; height: 22px; padding: 0 3px 2px; background: linear-gradient(90deg, #eee, #fdfdfd); }
.bottombar svg { width: 10px; height: 10px; }
```
